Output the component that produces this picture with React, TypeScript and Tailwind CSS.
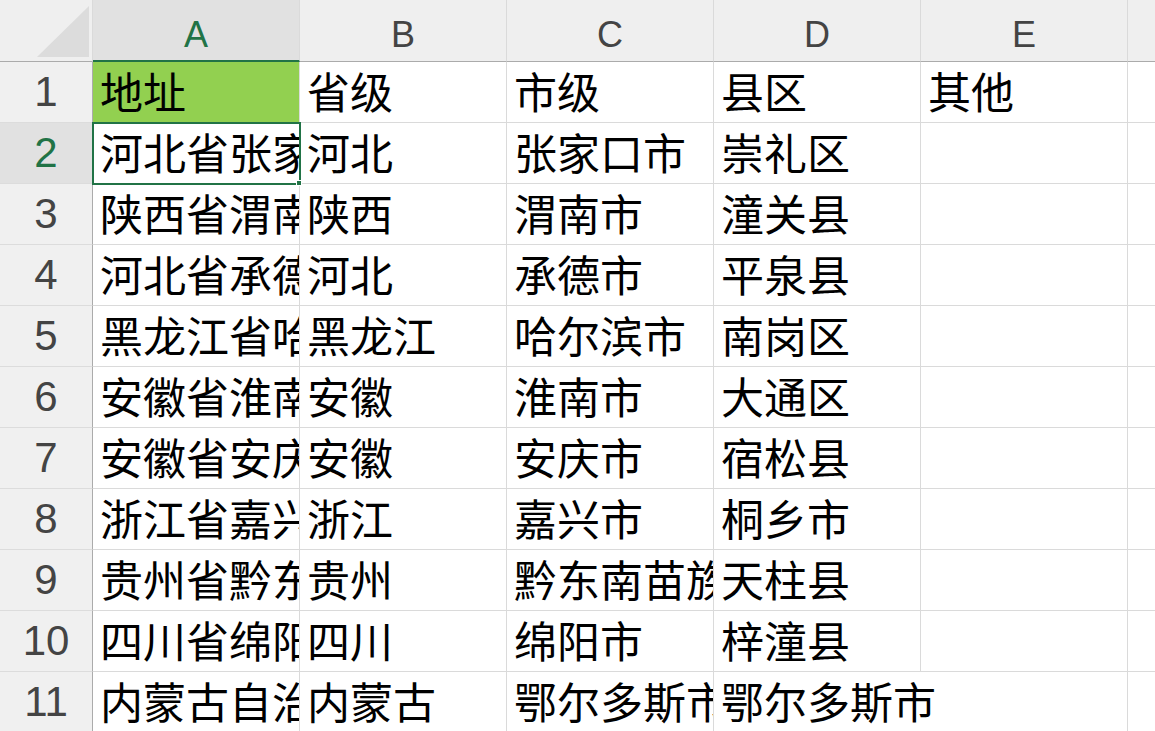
import React from 'react';

const COLS = ['A', 'B', 'C', 'D', 'E', 'F'];

const ROWS: string[][] = [
  ['地址', '省级', '市级', '县区', '其他'],
  ['河北省张家口市崇礼区', '河北', '张家口市', '崇礼区', ''],
  ['陕西省渭南市潼关县', '陕西', '渭南市', '潼关县', ''],
  ['河北省承德市平泉县', '河北', '承德市', '平泉县', ''],
  ['黑龙江省哈尔滨市南岗区', '黑龙江', '哈尔滨市', '南岗区', ''],
  ['安徽省淮南市大通区', '安徽', '淮南市', '大通区', ''],
  ['安徽省安庆市宿松县', '安徽', '安庆市', '宿松县', ''],
  ['浙江省嘉兴市桐乡市', '浙江', '嘉兴市', '桐乡市', ''],
  ['贵州省黔东南苗族侗族自治州天柱县', '贵州', '黔东南苗族侗族自治州', '天柱县', ''],
  ['四川省绵阳市梓潼县', '四川', '绵阳市', '梓潼县', ''],
  ['内蒙古自治区鄂尔多斯市', '内蒙古', '鄂尔多斯市', '鄂尔多斯市', ''],
];

const cjk = "font-['Noto_Sans_CJK_SC',sans-serif]";
const latin = "font-['Liberation_Sans',Arial,sans-serif]";

export default function App() {
  return (
    <div className="relative w-[1155px] h-[731px] overflow-hidden bg-white">
      {/* column headers */}
      <div className="flex h-[62px]">
        <div className="w-[93px] shrink-0 bg-[#efefef] border-r border-r-[#dadada] border-b border-b-[#ababab]">
          <svg width="92" height="61" viewBox="0 0 92 61">
            <polygon points="37,57 89,6 89,57" fill="#dcdcdc" />
          </svg>
        </div>
        {COLS.map((c, i) => (
          <div
            key={c}
            className={`w-[207px] shrink-0 flex items-center justify-center pt-[9px] text-[36px] leading-none ${latin} border-r border-r-[#dadada] ${
              i === 0
                ? 'bg-[#e1e1e1] text-[#217346] border-b-2 border-b-[#217346]'
                : 'bg-[#efefef] text-[#444444] border-b border-b-[#ababab]'
            }`}
          >
            {c}
          </div>
        ))}
      </div>

      {/* rows */}
      {ROWS.map((row, r) => {
        const selected = r === 1;
        return (
          <div key={r} className="flex h-[61px]">
            <div
              className={`w-[93px] shrink-0 flex items-center justify-center text-[42px] leading-none ${latin} border-r border-r-[#ababab] border-b border-b-[#dcdcdc] ${
                selected ? 'bg-[#e1e1e1] text-[#217346]' : 'bg-[#f0f0f0] text-[#444444]'
              }`}
            >
              {r + 1}
            </div>
            {[...row, ''].map((text, c) => {
              // D11 spills into the empty E11, so no grid line between them
              const spill = r === 10 && c === 3;
              return (
                <div
                  key={c}
                  className={`w-[207px] shrink-0 flex items-center pl-[7px] pb-[4px] text-[43px] leading-none text-black whitespace-nowrap ${cjk} border-b border-b-[#dadada] ${
                    spill ? 'border-r border-r-transparent overflow-visible relative z-10' : 'border-r border-r-[#dadada] overflow-hidden'
                  } ${r === 0 && c === 0 ? 'bg-[#92d050]' : ''}`}
                >
                  {text}
                </div>
              );
            })}
          </div>
        );
      })}

      {/* active cell A2 */}
      <div className="absolute left-[92px] top-[122px] w-[209px] h-[63px] border-2 border-[#217346] pointer-events-none" />
      <div className="absolute left-[296px] top-[180px] w-[6px] h-[6px] bg-[#217346] border border-white" />
    </div>
  );
}
